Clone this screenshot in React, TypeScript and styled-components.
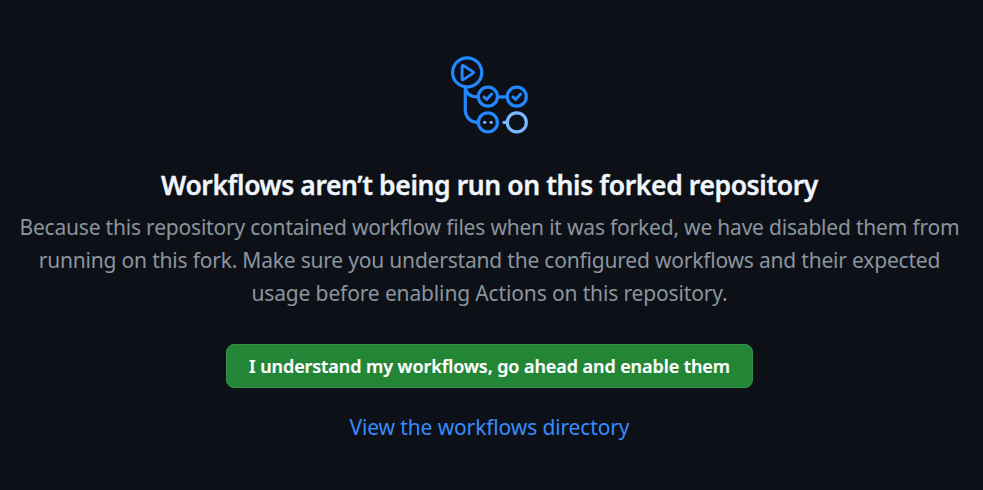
import React from "react";
import styled, { createGlobalStyle } from "styled-components";

const GlobalStyle = createGlobalStyle`
  body {
    margin: 0;
    background: #0d1117;
    font-family: "Noto Sans", "Segoe UI", sans-serif;
    font-variant-ligatures: none;
  }
`;

const Blankslate = styled.main`
  display: flex;
  flex-direction: column;
  align-items: center;
  box-sizing: border-box;
  width: 979px;
  height: 490px;
  padding-top: 52px;
  overflow: hidden;
  text-align: center;
`;

const Icon = styled.svg`
  display: block;
  width: 89px;
  height: 88px;
  margin-bottom: 25px;
  fill: none;
  stroke: #2188ff;
  stroke-width: 3.2;
  stroke-linecap: round;
  stroke-linejoin: round;
`;

const Heading = styled.h1`
  margin: 0 0 6px;
  color: #f0f6fc;
  font-size: 26.5px;
  font-weight: 600;
  line-height: 40px;
  letter-spacing: -0.4px;
  -webkit-text-stroke: 0.35px currentColor;
  white-space: nowrap;
`;

const Description = styled.p`
  margin: 0 0 34px;
  color: #8b949e;
  font-size: 21px;
  line-height: 33px;
`;

const TextLine = styled.span<{ $tracking: number }>`
  display: block;
  white-space: nowrap;
  letter-spacing: ${(p) => p.$tracking}px;
`;

const EnableButton = styled.button`
  box-sizing: border-box;
  width: 527px;
  height: 44px;
  margin: 0 0 23px;
  padding: 0;
  border: 1px solid #36924a;
  border-radius: 8px;
  background: #238636;
  color: #ffffff;
  font: 600 18px/28px "Noto Sans", "Segoe UI", sans-serif;
  font-variant-ligatures: none;
  letter-spacing: -0.08px;
  -webkit-text-stroke: 0.2px currentColor;
  white-space: nowrap;
  cursor: pointer;
`;

const DirectoryLink = styled.a`
  color: #388bfd;
  font-size: 21px;
  line-height: 33px;
  letter-spacing: -0.13px;
  text-decoration: none;
`;

const WorkflowIcon = () => (
  <Icon viewBox="445 52 89 88" aria-hidden="true">
    <path d="M465.3 88v22.3a12 12 0 0 0 12 12" />
    <path d="M465.3 88c1.2 5.8 5.2 8.8 11.5 8.8M499 96.8h7" />
    <circle cx="467.2" cy="72.4" r="14.6" />
    <path
      d="M462.1 66.2v12.8a.8.8 0 0 0 1.25.65l9.8-6.5a.8.8 0 0 0 0-1.3l-9.8-6.3a.8.8 0 0 0-1.25.65z"
      strokeWidth="2.9"
    />
    <circle cx="487.9" cy="96.7" r="9.5" />
    <circle cx="516.8" cy="96.7" r="9.5" />
    <path d="M484 96.9l2.7 2.6 5-5.4M512.9 96.9l2.7 2.6 5-5.4" strokeWidth="2.9" />
    <circle cx="487.9" cy="122.4" r="9.5" />
    <g stroke="none" fill="#79b8ff">
      <circle cx="484.7" cy="122.3" r="1.6" />
      <circle cx="491.2" cy="122.3" r="1.6" />
    </g>
    <g stroke="#79b8ff">
      <path d="M504 122.4h3" />
      <circle cx="516.8" cy="122.4" r="9.5" />
    </g>
  </Icon>
);

export default function App() {
  return (
    <>
      <GlobalStyle />
      <Blankslate>
        <WorkflowIcon />
        <Heading>Workflows aren’t being run on this forked repository</Heading>
        <Description>
          <TextLine $tracking={-0.2}>
            Because this repository contained workflow files when it was forked, we have disabled them from
          </TextLine>
          <TextLine $tracking={-0.2}>
            running on this fork. Make sure you understand the configured workflows and their expected
          </TextLine>
          <TextLine $tracking={-0.14}>usage before enabling Actions on this repository.</TextLine>
        </Description>
        <EnableButton type="button">I understand my workflows, go ahead and enable them</EnableButton>
        <DirectoryLink href="#">View the workflows directory</DirectoryLink>
      </Blankslate>
    </>
  );
}
